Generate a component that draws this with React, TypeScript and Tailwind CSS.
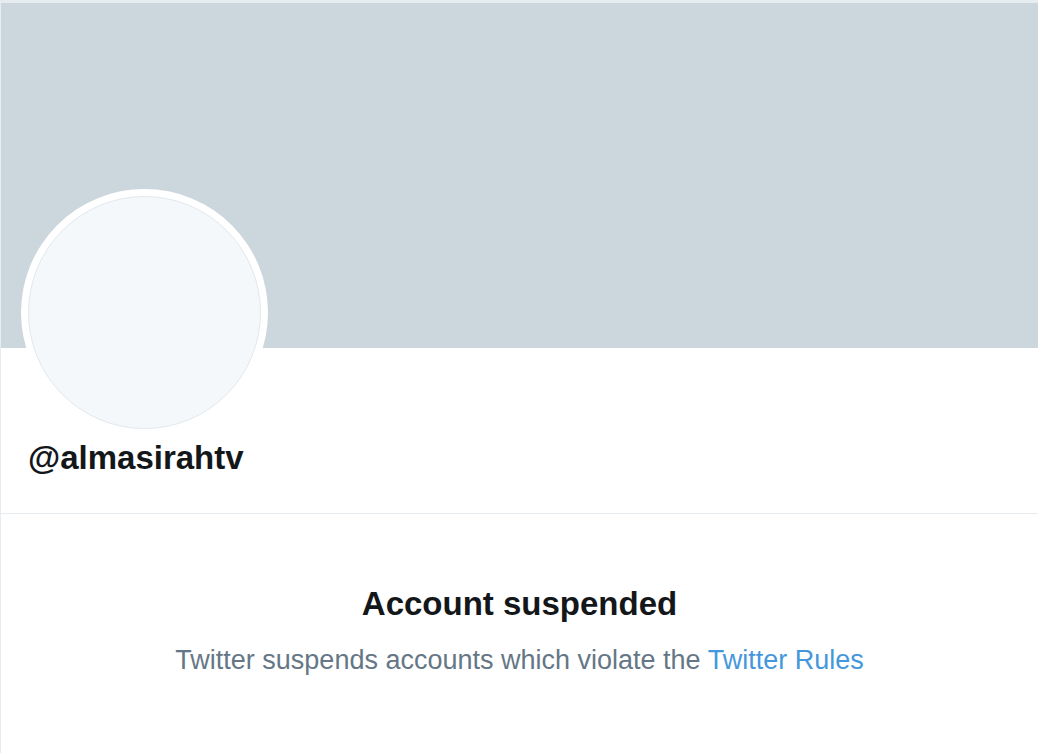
import React from 'react';

const font = { fontFamily: '"Liberation Sans", Arial, Helvetica, sans-serif' };

export default function App() {
  return (
    <div className="min-h-[753px] w-[1038px] bg-white" style={font}>
      <div className="min-h-[753px] border-l border-t-[3px] border-[#e6ecf0]">
        {/* header banner */}
        <div className="h-[345px] bg-[#ccd6dd]" />

        {/* avatar + handle */}
        <div className="border-b border-[#e6ecf0] px-[20px] pb-[36px]">
          <div className="-mt-[159px] h-[247px] w-[247px] rounded-full bg-white p-[7px]">
            <div className="h-full w-full rounded-full border border-[#e1e8ed] bg-[#f5f8fa]" />
          </div>
          <div className="mt-[3px] pl-[7px] text-[33px] font-bold leading-[38px] text-[#14171a]">
            @almasirahtv
          </div>
        </div>

        {/* suspended notice */}
        <div className="flex flex-col items-center pt-[71px] text-center">
          <h1 className="text-[33px] font-bold leading-[38px] text-[#14171a]">Account suspended</h1>
          <p className="mt-[21px] text-[27px] leading-[32px] text-[#657786]">
            Twitter suspends accounts which violate the{' '}
            <a href="#" className="text-[#4597dc]">
              Twitter Rules
            </a>
          </p>
        </div>
      </div>
    </div>
  );
}
